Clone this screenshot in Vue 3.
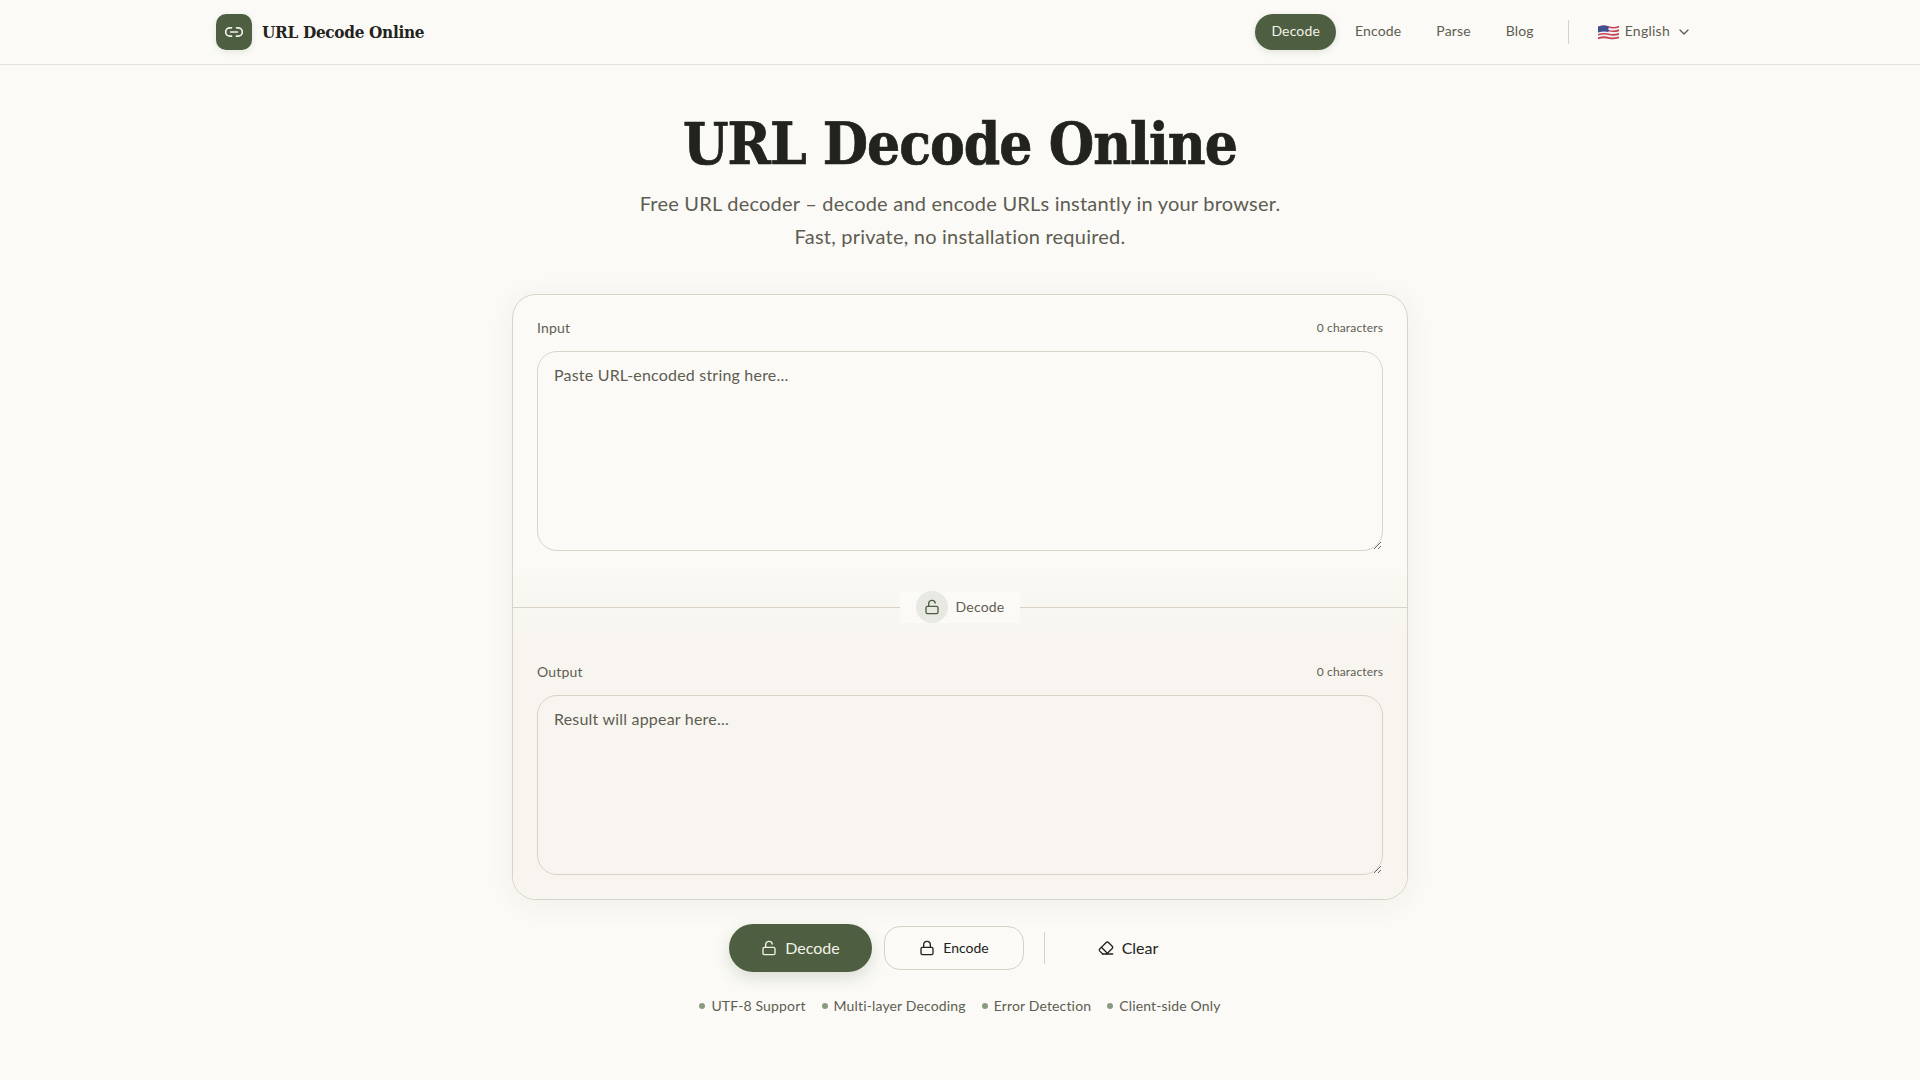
<script setup>
import { ref } from 'vue'

const input = ref('')
const output = ref('')
const links = ['Decode', 'Encode', 'Parse', 'Blog']
const features = ['UTF-8 Support', 'Multi-layer Decoding', 'Error Detection', 'Client-side Only']
</script>

<template>
  <div class="page">
    <header class="topbar">
      <div class="topbar-inner">
        <a class="brand">
          <span class="brand-mark">
            <svg width="20" height="20" viewBox="0 0 24 24" fill="none" stroke="currentColor" stroke-width="2" stroke-linecap="round" stroke-linejoin="round">
              <path d="M9 17H7A5 5 0 0 1 7 7h2" />
              <path d="M15 7h2a5 5 0 1 1 0 10h-2" />
              <line x1="8" y1="12" x2="16" y2="12" />
            </svg>
          </span>
          <span class="brand-name">URL Decode Online</span>
        </a>
        <nav class="nav">
          <a v-for="(link, i) in links" :key="link" class="nav-link" :class="{ active: i === 0 }">{{ link }}</a>
          <span class="nav-sep"></span>
          <button class="lang">
            <svg class="flag" width="20" height="16" viewBox="0 0 20 16">
              <path d="M0 2.500Q5 .5 10 2t10-.5v12q-5 1.800-10 .5t-10 .5z" fill="#eef0f4" />
              <path d="M0 2.500Q5 .5 10 2t10-.5v1.800q-5 1.500-10 .2t-10 .5zM0 6Q5 4 10 5.500t10-.5v1.700q-5 1.500-10 .2t-10 .5zM0 9.500Q5 7.700 10 9t10-.5v1.700q-5 1.500-10 .2t-10 .5zM0 12.700q5-1.800 10-.5t10-.5v1.800q-5 1.800-10 .5t-10 .5z" fill="#c8414f" />
              <path d="M0 2.500Q5 .5 10 2v5.500q-5-1.200-10 .6z" fill="#3f4f8f" />
            </svg>
            <span>English</span>
            <svg width="16" height="16" viewBox="0 0 24 24" fill="none" stroke="currentColor" stroke-width="2" stroke-linecap="round" stroke-linejoin="round">
              <path d="m6 9 6 6 6-6" />
            </svg>
          </button>
        </nav>
      </div>
    </header>

    <main class="main">
      <h1 class="title">URL Decode Online</h1>
      <p class="subtitle">Free URL decoder – decode and encode URLs instantly in your browser.<br />Fast, private, no installation required.</p>

      <section class="card">
        <div class="panel">
          <div class="panel-head">
            <label>Input</label>
            <span class="count">0 characters</span>
          </div>
          <textarea v-model="input" class="field field-input" placeholder="Paste URL-encoded string here..."></textarea>
        </div>

        <div class="divider">
          <div class="chip">
            <span class="chip-icon">
              <svg width="16" height="16" viewBox="0 0 24 24" fill="none" stroke="currentColor" stroke-width="2" stroke-linecap="round" stroke-linejoin="round">
                <rect x="3" y="11" width="18" height="11" rx="2" />
                <path d="M7 11V7a5 5 0 0 1 9.900-1" />
              </svg>
            </span>
            <span class="lift">Decode</span>
          </div>
        </div>

        <div class="panel panel-output">
          <div class="panel-head">
            <label>Output</label>
            <span class="count">0 characters</span>
          </div>
          <textarea v-model="output" class="field field-output" readonly placeholder="Result will appear here..."></textarea>
        </div>
      </section>

      <div class="actions">
        <button class="btn btn-primary">
          <svg width="16" height="16" viewBox="0 0 24 24" fill="none" stroke="currentColor" stroke-width="2" stroke-linecap="round" stroke-linejoin="round">
            <rect x="3" y="11" width="18" height="11" rx="2" />
            <path d="M7 11V7a5 5 0 0 1 9.900-1" />
          </svg>
          <span class="lift">Decode</span>
        </button>
        <button class="btn btn-outline">
          <svg width="16" height="16" viewBox="0 0 24 24" fill="none" stroke="currentColor" stroke-width="2" stroke-linecap="round" stroke-linejoin="round">
            <rect x="3" y="11" width="18" height="11" rx="2" />
            <path d="M7 11V7a5 5 0 0 1 10 0v4" />
          </svg>
          <span class="lift">Encode</span>
        </button>
        <span class="actions-sep"></span>
        <button class="btn btn-ghost">
          <svg width="16" height="16" viewBox="0 0 24 24" fill="none" stroke="currentColor" stroke-width="2" stroke-linecap="round" stroke-linejoin="round">
            <path d="m7 21-4.300-4.300c-1-1-1-2.500 0-3.400l9.600-9.600c1-1 2.500-1 3.400 0l5.600 5.600c1 1 1 2.500 0 3.400L13 21" />
            <path d="M22 21H7" />
            <path d="m5 11 9 9" />
          </svg>
          <span class="lift">Clear</span>
        </button>
      </div>

      <ul class="features">
        <li v-for="item in features" :key="item">{{ item }}</li>
      </ul>
    </main>
  </div>
</template>

<style>
html,
body {
  margin: 0;
  background: #fbfaf6;
}
</style>

<style scoped>
.page {
  min-height: 1080px;
  background: #fbfaf6;
  color: #22231c;
  font-family: Lato, "Noto Sans", sans-serif;
}

.topbar {
  height: 64px;
  border-bottom: 1px solid #e6e1d8;
}

.topbar-inner {
  box-sizing: border-box;
  max-width: 1536px;
  height: 100%;
  margin: 0 auto;
  padding: 0 24px;
  display: flex;
  align-items: center;
  justify-content: space-between;
}

.brand {
  display: flex;
  align-items: center;
  gap: 10px;
}

.brand-mark {
  width: 36px;
  height: 36px;
  border-radius: 10px;
  background: #4d5f40;
  color: #f3f1e9;
  display: flex;
  align-items: center;
  justify-content: center;
  box-shadow: 0 2px 6px rgba(77, 95, 64, 0.12);
}

.brand-name {
  font-family: "DejaVu Serif Condensed", "DejaVu Serif", serif;
  font-stretch: condensed;
  font-size: 17px;
  font-weight: 700;
  letter-spacing: -0.3px;
}

.nav {
  display: flex;
  align-items: center;
  gap: 3px;
  padding-right: 12px;
}

.nav-link {
  padding: 0 16px;
  height: 36px;
  line-height: 34px;
  border-radius: 18px;
  font-size: 14px;
  letter-spacing: 0.15px;
  color: #5e5d52;
}

.nav-link.active {
  background: #4d5f40;
  color: #f3f1e9;
  box-shadow: 0 2px 6px rgba(77, 95, 64, 0.15);
}

.nav-sep {
  width: 1px;
  height: 24px;
  margin: 0 12px 0 15px;
  background: #d9d0c4;
}

.lang {
  display: flex;
  align-items: center;
  gap: 6px;
  margin-left: 14px;
  padding: 0;
  border: 0;
  background: none;
  font: inherit;
  font-size: 14px;
  line-height: 18px;
  letter-spacing: 0.25px;
  color: #5e5d52;
}

.lang span {
  margin-bottom: 2px;
}

.flag {
  width: 21px;
  height: 17px;
}

.main {
  display: flex;
  flex-direction: column;
  align-items: center;
}

.title {
  margin: 41px 0 0;
  font-family: "DejaVu Serif Condensed", "DejaVu Serif", serif;
  font-stretch: condensed;
  font-size: 58px;
  line-height: 76px;
  font-weight: 700;
  letter-spacing: -1px;
  -webkit-text-stroke: 0.7px #22231c;
  color: #22231c;
}

.subtitle {
  margin: 5px 0 0;
  font-size: 20px;
  line-height: 33px;
  letter-spacing: 0.22px;
  text-align: center;
  color: #5e5d52;
}

.card {
  box-sizing: border-box;
  width: 896px;
  margin-top: 41px;
  border: 1px solid #d9d3c8;
  border-radius: 24px;
  background: #fbfaf6;
  box-shadow: 0 4px 28px rgba(60, 55, 40, 0.06);
  overflow: hidden;
}

.panel {
  padding: 24px;
}

.panel-output {
  background: #f8f5f0;
}

.panel-head {
  display: flex;
  align-items: flex-start;
  justify-content: space-between;
  height: 20px;
  margin-bottom: 12px;
  line-height: 17px;
}

.panel-head label {
  font-size: 14px;
  letter-spacing: 0.2px;
  color: #5e5d52;
}

.count {
  font-size: 12px;
  letter-spacing: 0.15px;
  color: #5e5d52;
}

.field {
  display: block;
  box-sizing: border-box;
  width: 100%;
  padding: 11px 16px;
  border: 1px solid #d9d3c8;
  border-radius: 20px;
  background: transparent;
  outline: none;
  font-family: inherit;
  font-size: 16px;
  line-height: 24px;
  letter-spacing: 0.2px;
  color: #22231c;
  resize: vertical;
}

.field::placeholder {
  color: #5e5d52;
  opacity: 1;
}

.field-input {
  height: 200px;
}

.field-output {
  height: 180px;
}

.divider {
  position: relative;
  height: 64px;
  display: flex;
  align-items: center;
  justify-content: center;
  background: linear-gradient(#f9f8f3, #f8f5f0);
}

.divider::before {
  content: "";
  position: absolute;
  left: 0;
  right: 0;
  top: 32px;
  height: 1px;
  background: #dbd2c7;
}

.chip {
  position: relative;
  display: flex;
  align-items: center;
  gap: 8px;
  height: 32px;
  padding: 0 16px;
  background: #fbfaf6;
  font-size: 14px;
  letter-spacing: 0.2px;
  color: #5e5d52;
}

.chip-icon {
  width: 32px;
  height: 32px;
  border-radius: 50%;
  background: #e8e9e2;
  color: #4d5f40;
  display: flex;
  align-items: center;
  justify-content: center;
}

.lift {
  margin-bottom: 2px;
}

.actions {
  display: flex;
  align-items: center;
  gap: 12px;
  margin-top: 24px;
  height: 48px;
}

.btn {
  display: flex;
  align-items: center;
  justify-content: center;
  gap: 8px;
  border: 0;
  background: none;
  font-family: inherit;
  color: #22231c;
}

.btn-primary {
  width: 143px;
  height: 48px;
  border-radius: 24px;
  background: #4d5f40;
  color: #f3f1e9;
  font-size: 16px;
  box-shadow: 0 6px 16px rgba(77, 95, 64, 0.18);
}

.btn-outline {
  width: 140px;
  height: 44px;
  border: 1px solid #d9d0c4;
  border-radius: 16px;
  background: #fbfaf6;
  font-size: 14px;
}

.actions-sep {
  width: 1px;
  height: 32px;
  margin: 0 8px;
  background: #d9d0c4;
}

.btn-ghost {
  width: 126px;
  height: 44px;
  font-size: 16px;
}

.features {
  list-style: none;
  display: flex;
  gap: 16px;
  margin: 24px 0 0;
  padding: 0;
  font-size: 14px;
  line-height: 20px;
  letter-spacing: 0.15px;
  color: #5e5d52;
}

.features li {
  display: flex;
  align-items: center;
  gap: 6px;
}

.features li::before {
  content: "";
  width: 6px;
  height: 6px;
  border-radius: 50%;
  background: #8a9a80;
}
</style>
